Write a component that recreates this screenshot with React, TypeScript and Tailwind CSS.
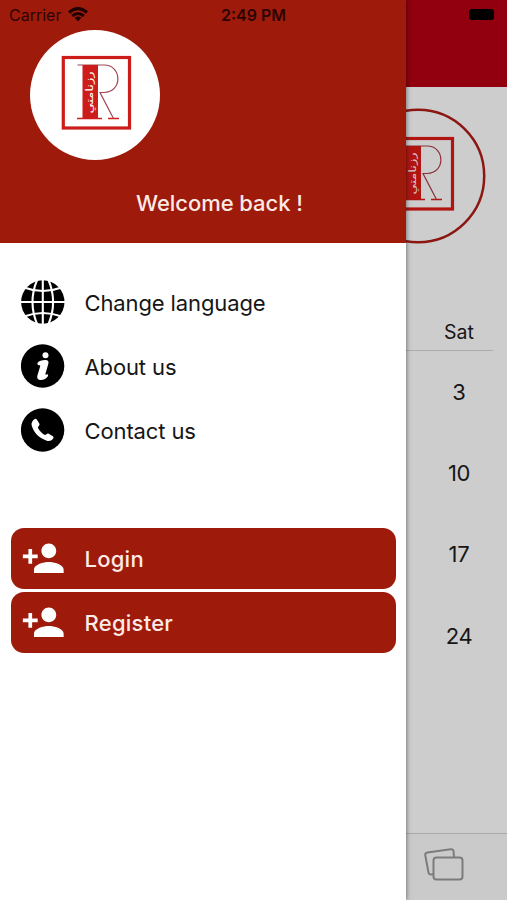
import type { ReactNode } from "react";
import { MdPersonAdd } from "react-icons/md";

function Logo({ outlined = false }: { outlined?: boolean }) {
  const red = outlined ? "#b01512" : "#cc1d1a";

  return (
    <svg className="w-[136px] h-[136px] shrink-0" viewBox="-3 -3 136 136" fill="none">
      {outlined ? (
        <circle cx="65" cy="65" r="66.2" stroke="#8c1611" strokeWidth="2.5" />
      ) : (
        <circle cx="65" cy="65" r="65" fill="#fff" />
      )}
      <g stroke={red}>
        <rect x="33.3" y="27.5" width="66.200" height="70.5" strokeWidth="3.2" />
        <path d="M47 88.5H72M78 88.500H89" strokeWidth="1.5" />
      </g>
      <path
        d="M47.500 35H74C92.500 35 92.500 62.500 74 62.500H70L83.500 88.500"
        stroke={outlined ? "#8a3038" : "#a34652"}
        strokeWidth="1.2"
      />
      <rect x="52.500" y="35" width="15.500" height="54" fill={red} />
      <text
        x="0"
        y="0"
        transform="translate(62.800 62.500) rotate(-90)"
        textAnchor="middle"
        fill={outlined ? "#d9c9c9" : "#fff"}
        fontSize="10"
        textLength="42"
        lengthAdjust="spacingAndGlyphs"
        fontFamily="DejaVu Sans, sans-serif"
      >
        رزنامتي
      </text>
    </svg>
  );
}

function GlobeIcon() {
  return (
    <svg className="w-11 h-11" viewBox="0 0 44 44" fill="none">
      <circle cx="21.800" cy="22" r="21.700" fill="#000" />
      <g stroke="#fff" strokeWidth="2.1">
        <path d="M21.800 0V44M0 22H44" />
        <path d="M16.500-1Q6.500 22 16.500 45M27.100-1Q37.100 22 27.100 45" />
        <path d="M3 7.500Q21.800 14.500 40.600 7.500M3 36.500Q21.800 29.500 40.600 36.500" />
      </g>
    </svg>
  );
}

function InfoIcon() {
  return (
    <svg className="w-11 h-11" viewBox="0 0 44 44">
      <circle cx="21.600" cy="22" r="21.700" fill="#000" />
      <circle cx="24.500" cy="11.300" r="3" fill="#fff" />
      <path
        d="M16.600 18.800C18 16.600 21.500 15.900 24.500 16C27 16.100 27.900 17.400 27.400 19.500L24.400 30C24.200 31 25.200 30.800 26.300 30.300C27.400 30.600 27.400 31.600 26.500 32.800C24.500 35.300 21.500 36.500 19 36C16.600 35.600 15.700 33.900 16.400 31.400L19.200 22.200C19.400 21.100 18.600 21.200 17.400 21.300C16.500 20.900 16.200 19.900 16.600 18.800Z"
        fill="#fff"
      />
    </svg>
  );
}

function PhoneIcon() {
  return (
    <svg className="w-11 h-11" viewBox="0 0 44 44">
      <circle cx="21.600" cy="22" r="21.700" fill="#000" />
      <path
        d="M13.300 11.300C14 10.500 15.200 10.500 15.800 11.500L18.300 15.600C18.800 16.500 18.500 17.200 17.800 17.900C16.800 18.800 16.700 19.500 17.300 20.600C18.700 23 20.500 24.900 22.900 26.500C23.900 27.200 24.600 27.100 25.400 26.200C26.100 25.400 27 25.300 27.800 25.800L31.800 28.200C32.800 28.900 32.700 30 32 30.800C30.500 32.700 28.200 33.500 25.800 32.700C18.200 30.300 13 25 10.700 17.600C10 15.200 11.300 13 13.300 11.300Z"
        fill="#fff"
      />
    </svg>
  );
}

function CardsIcon() {
  return (
    <svg
      className="w-10 h-[34px]"
      viewBox="0 0 40 34"
      fill="none"
      stroke="#7c7c7c"
      strokeWidth="2"
      strokeLinecap="round"
      strokeLinejoin="round"
    >
      <path d="M30 8.500L29.500 3.200Q29.100 .9 26.700 1.200L3.400 4.600Q.9 5 1.300 7.500L4.500 24.500Q5 26.700 7.200 26.500L9 26.200" />
      <rect x="9.500" y="9.600" width="29" height="22" rx="3" />
    </svg>
  );
}

function MenuItem({ icon, label }: { icon: ReactNode; label: string }) {
  return (
    <button className="flex items-center gap-[19.500px] h-16 pl-[21px] text-left text-[22px] text-[#161616]">
      {icon}
      <span className="pt-[2px] tracking-[-0.120px]">{label}</span>
    </button>
  );
}

function AuthButton({ label }: { label: string }) {
  return (
    <button className="flex items-center h-[61px] w-[385px] pl-[10px] rounded-[13px] bg-[#9e1a0b] text-white">
      <MdPersonAdd className="w-[44.500px] h-[44.500px]" />
      <span className="ml-[19px] pt-[2px] text-[22px] font-medium tracking-[0.250px] text-[#fbeae6]">{label}</span>
    </button>
  );
}

function StatusBar() {
  return (
    <div className="absolute inset-x-0 top-0 z-20 h-[29px] grid grid-cols-3 items-center pl-[9px] pr-[13px] text-[#2c0402]">
      <div className="flex items-center gap-[7px] text-base">
        Carrier
        <svg className="w-5 h-[15px]" viewBox="0 0 20 15" fill="none" stroke="#1d0201" strokeWidth="3.1">
          <path d="M1 5.500Q10-2.200 19 5.500M4.200 9Q10 4 15.800 9" />
          <path d="M6.700 10.800Q10 8.200 13.300 10.800L10 14.300Z" fill="#1d0201" stroke="none" />
        </svg>
      </div>
      <div className="pl-1 text-center text-base font-semibold">2:49 PM</div>
      <div className="justify-self-end w-[25px] h-[11px] rounded-[3px] bg-black" />
    </div>
  );
}

function Drawer() {
  return (
    <aside className="relative z-10 flex flex-col w-[406px] h-full shrink-0 bg-white shadow-[0_0_5px_rgba(0,0,0,0.55)]">
      <header className="flex flex-col h-[243px] pt-[27px] pl-[27px] bg-[#9e1a0b]">
        <Logo />
        <h1 className="mt-[24px] ml-[109px] text-[22px] leading-8 font-medium tracking-[-0.050px] text-[#fbeae6]">
          Welcome back !
        </h1>
      </header>
      <nav className="flex flex-col pt-[27px]">
        <MenuItem icon={<GlobeIcon />} label="Change language" />
        <MenuItem icon={<InfoIcon />} label="About us" />
        <MenuItem icon={<PhoneIcon />} label="Contact us" />
      </nav>
      <div className="flex flex-col gap-[3px] pt-[66px] pl-[11px]">
        <AuthButton label="Login" />
        <AuthButton label="Register" />
      </div>
    </aside>
  );
}

const saturdays = [3, 10, 17, 24];

function CalendarPage() {
  return (
    <main className="flex flex-col flex-1 h-full overflow-hidden bg-[#cdcdcd] text-[#161616]">
      <div className="h-[87px] shrink-0 bg-[#92000f]" />
      <div className="mt-[21px] -ml-[56px] flex">
        <Logo outlined />
      </div>
      <div className="mt-[69px] w-[87px] flex flex-col">
        <div className="flex h-[38px] justify-end border-b border-[#adadad]">
          <span className="w-[68px] pt-px text-center text-[19.500px] leading-9">Sat</span>
        </div>
        {saturdays.map((day) => (
          <div key={day} className="flex h-[81.300px] items-center justify-end">
            <span className="w-[68px] pt-px text-center text-[22px] tracking-[-0.300px]">{day}</span>
          </div>
        ))}
      </div>
      <footer className="mt-auto h-[67px] pt-[14px] pl-[18px] border-t border-[#aaa] bg-[#cacaca]">
        <CardsIcon />
      </footer>
    </main>
  );
}

export default function App() {
  return (
    <div className="relative flex w-[507px] h-[900px] overflow-hidden font-['Inter',sans-serif]">
      <Drawer />
      <CalendarPage />
      <StatusBar />
    </div>
  );
}
